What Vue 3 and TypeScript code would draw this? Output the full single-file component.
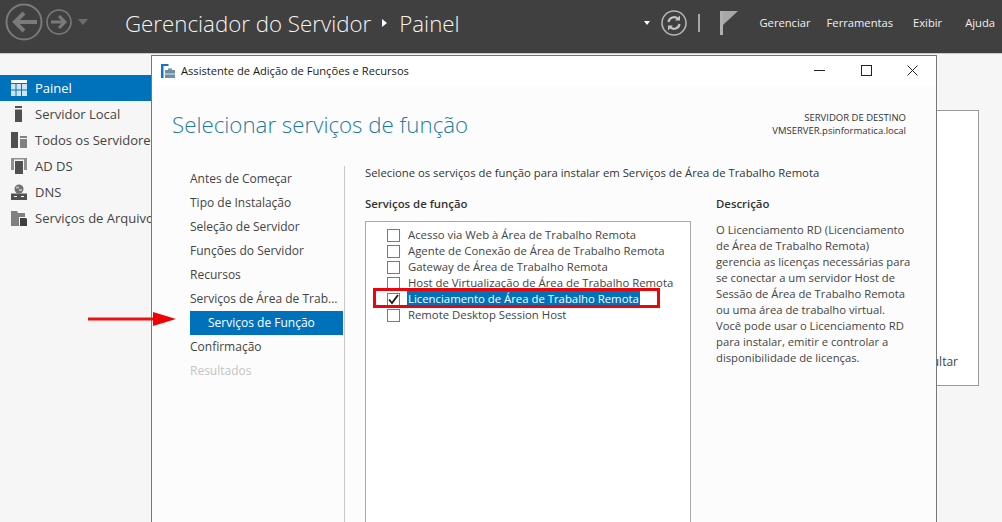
<script setup lang="ts">
const navItems = [
  { label: 'Antes de Começar' },
  { label: 'Tipo de Instalação' },
  { label: 'Seleção de Servidor' },
  { label: 'Funções do Servidor' },
  { label: 'Recursos' },
  { label: 'Serviços de Área de Trab...' },
  { label: 'Serviços de Função', active: true },
  { label: 'Confirmação' },
  { label: 'Resultados', disabled: true },
]
const roles = [
  { label: 'Acesso via Web à Área de Trabalho Remota' },
  { label: 'Agente de Conexão de Área de Trabalho Remota' },
  { label: 'Gateway de Área de Trabalho Remota' },
  { label: 'Host de Virtualização de Área de Trabalho Remota' },
  { label: 'Licenciamento de Área de Trabalho Remota', checked: true },
  { label: 'Remote Desktop Session Host' },
]
const sideItems = ['Painel', 'Servidor Local', 'Todos os Servidores', 'AD DS', 'DNS', 'Serviços de Arquivo']
const descLines = [
  'O Licenciamento RD (Licenciamento',
  'de Área de Trabalho Remota)',
  'gerencia as licenças necessárias para',
  'se conectar a um servidor Host de',
  'Sessão de Área de Trabalho Remota',
  'ou uma área de trabalho virtual.',
  'Você pode usar o Licenciamento RD',
  'para instalar, emitir e controlar a',
  'disponibilidade de licenças.',
]
</script>

<template>
  <div class="page">
    <header class="top">
      <div class="nav-btns">
        <svg width="38" height="38" viewBox="0 0 38 38" class="back">
          <circle cx="19" cy="19" r="17.500" fill="none" stroke="#7a7a7a" stroke-width="2" />
          <path d="M32 19H10M19 10l-9 9 9 9" fill="none" stroke="#7a7a7a" stroke-width="4" />
        </svg>
        <svg width="26" height="26" viewBox="0 0 26 26" class="fwd">
          <circle cx="13" cy="13" r="12" fill="none" stroke="#7a7a7a" stroke-width="1.600" />
          <path d="M5 13h14M13 7l6 6-6 6" fill="none" stroke="#7a7a7a" stroke-width="3" />
        </svg>
        <span class="caret dim"></span>
      </div>
      <div class="crumb">
        <span class="crumb-a">Gerenciador do Servidor</span>
        <span class="crumb-sep"></span>
        <span class="crumb-b">Painel</span>
      </div>
      <div class="tools">
        <span class="caret small"></span>
        <svg width="28" height="28" viewBox="0 0 28 28" class="refresh">
          <circle cx="14" cy="14" r="12" fill="none" stroke="#b4b4b4" stroke-width="1.600" />
          <path d="M8.500 13a5.600 5.600 0 0 1 9.600-3M19.500 15a5.600 5.600 0 0 1-9.600 3" fill="none" stroke="#c4c4c4" stroke-width="2.200" />
          <path d="M20 6.500v5h-5zM8 21.500v-5h5z" fill="#c4c4c4" />
        </svg>
        <span class="pipe"></span>
        <svg width="18" height="24" viewBox="0 0 18 24" class="flag">
          <path d="M0 0h3v24H0z" fill="#b0b0b0" />
          <path d="M3 0h15L3 14z" fill="#a8a8a8" />
        </svg>
        <nav class="menu">
          <span>Gerenciar</span><span>Ferramentas</span><span>Exibir</span><span>Ajuda</span>
        </nav>
      </div>
    </header>

    <div class="workspace">
      <aside class="side">
        <div v-for="(s, i) in sideItems" :key="s" class="side-row" :class="{ on: i === 0 }">
          <svg width="16" height="16" viewBox="0 0 16 16" class="side-ico">
            <g v-if="i === 0" fill="#cfe4f5">
              <path d="M0 0h16v3H0z" fill="#fff" />
              <path d="M0 4h4.500v5.500H0zM5.500 4H10v5.500H5.500zM11 4h5v5.500h-5zM0 10.500h4.500V16H0zM5.500 10.500H10V16H5.500zM11 10.500h5V16h-5z" />
            </g>
            <g v-else-if="i === 1" fill="#505050">
              <path d="M4 0h7v2H4zM4 3.500h7V16H4z" />
            </g>
            <g v-else-if="i === 2">
              <path d="M0 0h7v16H0z" fill="#505050" />
              <path d="M9 4h7v2H9z" fill="#808080" />
              <path d="M9 7h7v9H9z" fill="#808080" />
            </g>
            <g v-else-if="i === 3">
              <path d="M0 0h3v12H0zM13 0h3v12h-3zM3 0h10v1.500H3z" fill="#909090" />
              <path d="M4 3h8v13H4z" fill="#505050" />
            </g>
            <g v-else-if="i === 4">
              <circle cx="8" cy="5" r="4.500" fill="#707070" />
              <path d="M5 2.500h3v2H5zM8 5h3v2H8z" fill="#b8b8b8" />
              <path d="M0 9.500h16V16H0z" fill="#505050" />
              <path d="M3 12h3v1H3zM10 12h3v1h-3z" fill="#fff" />
            </g>
            <g v-else>
              <path d="M0 1h6l1 2h7v4H8v9H0z" fill="#808080" />
              <path d="M9 8h6l1 1v7H9z" fill="#404040" />
            </g>
          </svg>
          <span class="side-label">{{ s }}</span>
        </div>
      </aside>

      <div class="behind">
        <div class="behind-card"><span class="behind-text">Ocultar</span></div>
      </div>
    </div>

    <section class="dialog">
      <div class="titlebar">
        <svg width="14" height="14" viewBox="0 0 14 14" class="app-ico">
          <path d="M0 0h2.500v14H0zM2.500 0h5v2h-5z" fill="#0f75c4" />
          <path d="M4 6h10v8H4z" fill="#6f8ea8" />
          <path d="M7 4.500h4V6H7z" fill="#6f8ea8" />
          <path d="M4 9.500h10v1H4z" fill="#dce6ee" />
        </svg>
        <span class="title-text">Assistente de Adição de Funções e Recursos</span>
        <div class="win-btns">
          <span class="w-min"></span>
          <span class="w-max"></span>
          <svg width="11" height="11" viewBox="0 0 11 11" class="w-x">
            <path d="M.5.500l10 10M10.500.500l-10 10" stroke="#222" stroke-width="1" fill="none" />
          </svg>
        </div>
      </div>

      <div class="dlg-body">
        <div class="dlg-head">
          <h1 class="dlg-title">Selecionar serviços de função</h1>
          <div class="dest">
            <div>SERVIDOR DE DESTINO</div>
            <div>VMSERVER.psinformatica.local</div>
          </div>
        </div>

        <div class="dlg-main">
          <ul class="steps">
            <li
              v-for="n in navItems"
              :key="n.label"
              :class="{ active: n.active, disabled: n.disabled }"
            >{{ n.label }}</li>
          </ul>

          <div class="content">
            <p class="intro">Selecione os serviços de função para instalar em Serviços de Área de Trabalho Remota</p>
            <div class="columns">
              <div class="col-roles">
                <h2 class="col-h">Serviços de função</h2>
                <div class="listbox">
                  <div v-for="r in roles" :key="r.label" class="role">
                    <span class="check" :class="{ checked: r.checked }">
                      <svg v-if="r.checked" width="11" height="11" viewBox="0 0 11 11">
                        <path d="M1 5.500l3 3.500 6-8" fill="none" stroke="#1a1a1a" stroke-width="1.800" />
                      </svg>
                    </span>
                    <span class="role-label" :class="{ sel: r.checked }">{{ r.label }}</span>
                  </div>
                  <span class="redbox"></span>
                </div>
              </div>
              <div class="col-desc">
                <h2 class="col-h desc-h">Descrição</h2>
                <p class="desc">
                  <span v-for="l in descLines" :key="l">{{ l }}</span>
                </p>
              </div>
            </div>
          </div>
        </div>
      </div>
    </section>

    <svg class="arrow" width="90" height="16" viewBox="0 0 90 16">
      <path d="M0 5.500h66v3H0z" fill="#ee1111" />
      <path d="M65 0l23 7-23 7z" fill="#f00000" />
    </svg>
  </div>
</template>

<style>
html, body { margin: 0; padding: 0; background: #f6f6f6; }
</style>

<style scoped>
.page {
  position: relative;
  width: 1002px;
  height: 522px;
  overflow: hidden;
  background: #f6f6f6;
  font-family: "Open Sans", "Noto Sans", sans-serif;
  font-size: 12px;
  color: #333;
  display: flex;
  flex-direction: column;
}
.top {
  height: 53px;
  flex: none;
  background: #404040;
  border-bottom: 1px solid #c8c8c8;
  display: flex;
  align-items: center;
  color: #fff;
  box-sizing: content-box;
}
.nav-btns {
  width: 125px;
  flex: none;
  display: flex;
  align-items: center;
  padding-left: 5px;
  box-sizing: border-box;
  margin-top: -10px;
}
.fwd { margin-left: 3px; }
.caret {
  width: 0;
  height: 0;
  border-left: 5px solid transparent;
  border-right: 5px solid transparent;
  border-top: 6px solid #6d6d6d;
  margin-left: 6px;
}
.caret.small {
  border-left-width: 3px;
  border-right-width: 3px;
  border-top: 4px solid #fff;
  margin: 0 10px 0 0;
}
.crumb {
  display: flex;
  align-items: center;
  font-size: 22.300px;
  font-weight: 300;
  color: #f4f4f4;
  margin-top: -7px;
}
.crumb-sep {
  width: 0;
  height: 0;
  border-top: 4px solid transparent;
  border-bottom: 4px solid transparent;
  border-left: 5px solid #fff;
  margin: 0 12px 0 11px;
}
.tools {
  margin-left: auto;
  display: flex;
  align-items: center;
  margin-top: -8px;
}
.refresh { margin-right: 10px; }
.pipe { width: 2px; height: 18px; background: #a8a8a8; margin-right: 20px; }
.flag { margin-right: 21px; }
.menu { display: flex; font-size: 11.200px; margin-right: 7px; color: #f0f0f0; }
.menu span:nth-child(2) { margin-left: 16px; }
.menu span:nth-child(3) { margin-left: 20px; }
.menu span:nth-child(4) { margin-left: 23px; }
.workspace { flex: 1; display: flex; min-height: 0; }
.side { width: 152px; flex: none; padding-top: 21px; box-sizing: border-box; }
.side-row {
  height: 26px;
  display: flex;
  align-items: center;
  padding-left: 11px;
  color: #444;
  font-size: 13px;
  white-space: nowrap;
}
.side-row.on { background: #0072bc; color: #fff; }
.side-ico { flex: none; }
.side-label { margin-left: 8px; }
.behind { flex: 1; position: relative; }
.behind-card {
  position: absolute;
  left: 720px;
  top: 56px;
  width: 107px;
  height: 276px;
  background: #fff;
  border: 1px solid #999;
  box-sizing: border-box;
}
.behind-text { position: absolute; right: 20px; top: 242px; font-size: 12px; color: #444; }
.dialog {
  position: absolute;
  left: 151px;
  top: 55px;
  width: 786px;
  height: 480px;
  box-sizing: border-box;
  background: #fcfcfc;
  border: 1px solid #777;
  border-top-color: #707070;
  display: flex;
  flex-direction: column;
}
.titlebar {
  height: 30px;
  flex: none;
  background: #fff;
  display: flex;
  align-items: center;
  padding-left: 9px;
  font-size: 11.150px;
  color: #1a1a1a;
}
.title-text { margin-left: 6px; margin-top: -2px; }
.win-btns { margin-left: auto; display: flex; align-items: center; margin-right: 18px; margin-top: -2px; }
.w-min { width: 11px; height: 1px; background: #222; margin-right: 36px; }
.w-max { width: 9px; height: 9px; border: 1px solid #222; margin-right: 35px; }
.dlg-body { flex: 1; min-height: 0; display: flex; flex-direction: column; }
.dlg-head {
  height: 80px;
  flex: none;
  display: flex;
  justify-content: space-between;
  padding: 0 30px 0 20px;
}
.dlg-title {
  margin: 24px 0 0;
  font-size: 22.300px;
  font-weight: 300;
  color: #1f7ba6;
  line-height: 30px;
}
.dest { margin-top: 25px; text-align: right; font-size: 9.500px; line-height: 13px; color: #333; }
.dlg-main { flex: 1; min-height: 0; display: flex; }
.steps {
  list-style: none;
  margin: 0;
  padding: 0;
  margin-left: 38px;
  width: 153px;
  flex: none;
  padding-top: 1px;
  font-size: 12px;
  color: #444;
}
.steps li { height: 24px; line-height: 24px; white-space: nowrap; overflow: hidden; }
.steps li.active { background: #0072bc; color: #fff; padding-left: 18px; }
.steps li.disabled { color: #c4c4c4; }
.content {
  flex: 1;
  margin-left: 1px;
  border-left: 1px solid #c8c8c8;
  padding-left: 20px;
  min-width: 0;
}
.intro { margin: -1px 0 0; height: 31px; font-size: 11.300px; line-height: 16px; color: #333; white-space: nowrap; }
.columns { display: flex; }
.col-roles { width: 326px; flex: none; }
.col-h { margin: 0; font-size: 11.400px; font-weight: 600; line-height: 16px; color: #333; height: 25px; }
.desc-h { height: 26px; }
.listbox {
  position: relative;
  border: 1px solid #aaa;
  background: #fff;
  height: 340px;
  padding-top: 5px;
  box-sizing: border-box;
}
.role { height: 16px; display: flex; align-items: center; padding-left: 21px; white-space: nowrap; font-size: 11.350px; color: #444; }
.check {
  width: 13px;
  height: 13px;
  box-sizing: border-box;
  border: 1px solid #7a7a7a;
  background: #fff;
  flex: none;
  display: flex;
  align-items: center;
  justify-content: center;
  margin-right: 8px;
}
.role-label { margin-top: -2px; }
.role-label.sel { background: #0072bc; color: #fff; line-height: 16px; padding: 0 1px; margin-left: -1px; margin-top: 0; }
.redbox {
  position: absolute;
  left: 7px;
  top: 66px;
  width: 287px;
  height: 20px;
  box-sizing: border-box;
  border: 3px solid #e8060c;
}
.col-desc { margin-left: 25px; width: 200px; flex: none; }
.desc { margin: 0; font-size: 11.250px; line-height: 16px; color: #444; }
.desc span { display: block; white-space: nowrap; }
.arrow { position: absolute; left: 88px; top: 312px; }
</style>
